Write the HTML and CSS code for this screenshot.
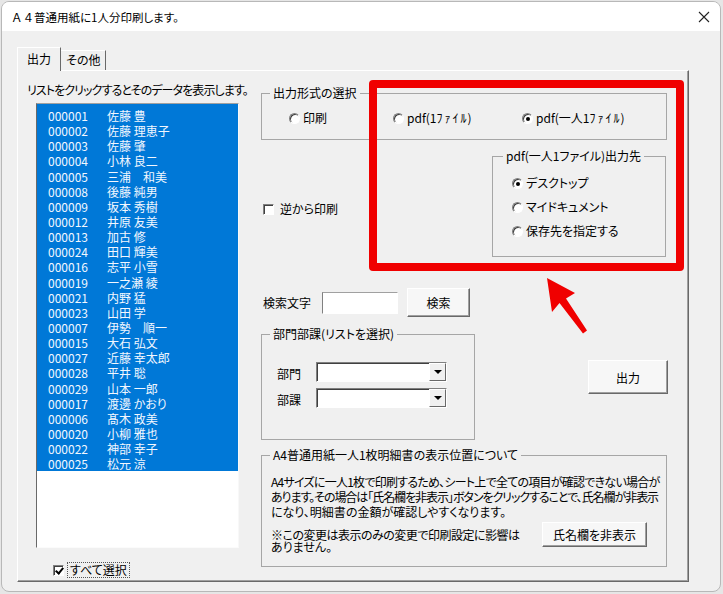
FILE: index.html
```html
<!DOCTYPE html>
<html lang="ja">
<head>
<meta charset="utf-8">
<title>A4</title>
<link rel="stylesheet" href="styles.css">
</head>
<body>
<div class="window">
  <div class="titlebar">
    <span class="title"><span class="fw">Ａ４</span>普通用紙に1人分印刷します。</span>
    <svg class="close" width="12" height="12" viewBox="0 0 12 12"><path d="M1 1L11 11M11 1L1 11" stroke="#222" stroke-width="1.1" fill="none"/></svg>
  </div>
  <div class="client">
    <div class="tabs">
      <div class="tab active">出力</div>
      <div class="tab">その他</div>
    </div>
    <div class="panel">
      <div class="left">
        <div class="hint">リストをクリックするとそのデータを表示します。</div>
        <div class="list">
          <div class="sel">
            <div class="row"><span class="id">000001</span><span>佐藤 豊</span></div>
            <div class="row"><span class="id">000002</span><span>佐藤 理恵子</span></div>
            <div class="row"><span class="id">000003</span><span>佐藤 肇</span></div>
            <div class="row"><span class="id">000004</span><span>小林 良二</span></div>
            <div class="row"><span class="id">000005</span><span>三浦　和美</span></div>
            <div class="row"><span class="id">000008</span><span>後藤 純男</span></div>
            <div class="row"><span class="id">000009</span><span>坂本 秀樹</span></div>
            <div class="row"><span class="id">000012</span><span>井原 友美</span></div>
            <div class="row"><span class="id">000013</span><span>加古 修</span></div>
            <div class="row"><span class="id">000024</span><span>田口 輝美</span></div>
            <div class="row"><span class="id">000016</span><span>志平 小雪</span></div>
            <div class="row"><span class="id">000019</span><span>一之瀬 綾</span></div>
            <div class="row"><span class="id">000021</span><span>内野 猛</span></div>
            <div class="row"><span class="id">000023</span><span>山田 学</span></div>
            <div class="row"><span class="id">000007</span><span>伊勢　順一</span></div>
            <div class="row"><span class="id">000015</span><span>大石 弘文</span></div>
            <div class="row"><span class="id">000027</span><span>近藤 幸太郎</span></div>
            <div class="row"><span class="id">000028</span><span>平井 聡</span></div>
            <div class="row"><span class="id">000029</span><span>山本 一郎</span></div>
            <div class="row"><span class="id">000017</span><span>渡邊 かおり</span></div>
            <div class="row"><span class="id">000006</span><span>髙木 政美</span></div>
            <div class="row"><span class="id">000020</span><span>小柳 雅也</span></div>
            <div class="row"><span class="id">000022</span><span>神部 幸子</span></div>
            <div class="row"><span class="id">000025</span><span>松元 涼</span></div>
          </div>
        </div>
        <div class="check-row all"><span class="cb checked"></span><span class="focus">すべて選択</span></div>
      </div>

      <div class="right">
        <fieldset class="group g-format">
          <legend>出力形式の選択</legend>
          <div class="radios-h">
            <span class="opt w1"><span class="rb"></span>印刷</span>
            <span class="opt w2"><span class="rb"></span>pdf(1<span class="hk">ﾌｧｲﾙ</span>)</span>
            <span class="opt"><span class="rb on"></span>pdf(一人1<span class="hk">ﾌｧｲﾙ</span>)</span>
          </div>
        </fieldset>

        <div class="mid">
          <div class="check-row reverse"><span class="cb"></span><span class="cb-text">逆から印刷</span></div>
          <fieldset class="group g-dest">
            <legend>pdf(一人1ファイル)出力先</legend>
            <div class="radios-v">
              <span class="opt"><span class="rb on"></span>デスクトップ</span>
              <span class="opt"><span class="rb"></span>マイドキュメント</span>
              <span class="opt"><span class="rb"></span>保存先を指定する</span>
            </div>
          </fieldset>
        </div>

        <div class="search">
          <span class="search-label">検索文字</span>
          <span class="input"></span>
          <span class="btn btn-search">検索</span>
        </div>

        <div class="dept-row">
          <fieldset class="group g-dept">
            <legend>部門部課(リストを選択)</legend>
            <div class="combos">
              <div class="combo-row"><span class="combo-label">部門</span><span class="combo"><span class="drop"></span></span></div>
              <div class="combo-row"><span class="combo-label">部課</span><span class="combo"><span class="drop"></span></span></div>
            </div>
          </fieldset>
          <span class="btn btn-out">出力</span>
        </div>

        <fieldset class="group g-info">
          <legend>A4普通用紙一人1枚明細書の表示位置について</legend>
          <div class="info">
            <div class="info-text"><div class="tight-1">A4サイズに一人1枚で印刷するため、シート上で全ての項目が確認できない場合が</div><div class="tight">あります。その場合は「氏名欄を非表示」ボタンをクリックすることで、氏名欄が非表示</div><div>になり、明細書の金額が確認しやすくなります。</div></div>
            <div class="info-bottom">
              <div class="note"><div class="note-1">※この変更は表示のみの変更で印刷設定に影響は</div><div>ありません。</div></div>
              <span class="btn btn-hide">氏名欄を非表示</span>
            </div>
          </div>
        </fieldset>
      </div>
    </div>
  </div>
</div>
<div class="annot-box"></div>
<svg class="annot-arrow" width="56" height="66" viewBox="0 0 56 66"><polygon points="7,6 35,21 26,26.5 47,58.5 43,61.5 19.5,31 12,40" fill="#f00000"/></svg>
</body>
</html>
```

FILE: styles.css
```css
* { box-sizing: border-box; }
html, body { margin: 0; padding: 0; }
body {
  width: 723px;
  height: 594px;
  position: relative;
  overflow: hidden;
  background: #e6e6e6;
  font-family: "Noto Sans CJK JP", "Noto Sans", sans-serif;
  font-size: 12px;
  color: #000;
  font-feature-settings: "palt" 1;
}
.window {
  margin: 1px 0 0 1px;
  width: 720px;
  height: 591px;
  border: 1px solid #b8b8b8;
  border-radius: 8px;
  overflow: hidden;
  background: #f0f0f0;
}
.titlebar {
  height: 29px;
  background: #fff;
  display: flex;
  align-items: center;
  padding-left: 9px;
}
.title { font-size: 11.5px; line-height: 16px; white-space: nowrap; }
.fw { font-feature-settings: normal; }
.close { margin-left: auto; margin-right: 10px; }

.client { padding: 16px 0 0 15px; }
.tabs { display: flex; align-items: flex-end; height: 23px; }
.tab {
  height: 20px;
  line-height: 18px;
  padding: 0 5px;
  border-top: 1px solid #fff;
  border-right: 1px solid #696969;
  font-size: 12px;
}
.tab.active {
  height: 24px;
  line-height: 22px;
  width: 44px;
  padding: 0 0 0 9px;
  margin-bottom: -1px;
  border-left: 1px solid #fff;
  background: #f0f0f0;
  position: relative;
  z-index: 1;
}

.panel {
  width: 672px;
  height: 512px;
  border-top: 1px solid #fff;
  border-left: 1px solid #fff;
  border-right: 1px solid #696969;
  border-bottom: 1px solid #696969;
  box-shadow: inset -1px -1px #a0a0a0;
  display: grid;
  grid-template-columns: 224px 406px;
  column-gap: 10px;
  align-items: start;
  padding-left: 9px;
}

/* left column */
.hint { margin-top: 11px; line-height: 16px; white-space: nowrap; letter-spacing: -0.9px; }
.list {
  margin: 5px 0 0 9px;
  width: 203px;
  height: 445px;
  background: #fff;
  border-top: 1px solid #a0a0a0;
  border-left: 1px solid #696969;
  border-right: 1px solid #f8f8f8;
  border-bottom: 1px solid #fbfbfb;
}
.sel {
  background: #0078d7;
  color: #f2f7ff;
  padding-top: 4px;
  height: 367px;
}
.row { display: flex; line-height: 15.15px; height: 15.15px; padding-left: 11px; white-space: nowrap; }
.id { width: 59px; }

.check-row { display: flex; align-items: center; line-height: 16px; white-space: nowrap; }
.all { margin: 14px 0 0 26px; }
.focus { margin-left: 3px; border: 1px dotted #555; padding: 0 2px; line-height: 14px; }
.cb {
  width: 11px;
  height: 11px;
  background: #fff;
  border: 1px solid;
  border-color: #808080 #fff #fff #808080;
  box-shadow: inset 1px 1px #404040;
  position: relative;
  flex: none;
}
.cb.checked::after {
  content: "";
  position: absolute;
  left: 3px;
  top: 0px;
  width: 3px;
  height: 6px;
  border: solid #000;
  border-width: 0 2px 2px 0;
  transform: rotate(40deg);
}

/* right column */
.right { margin-top: 14px; }
.group {
  margin: 0;
  padding: 0;
  min-width: 0;
  border: 1px solid #a6a6a6;
}
.group legend {
  padding: 0 3px;
  margin-left: 8px;
  line-height: 16px;
  font-size: 12px;
  white-space: nowrap;
}
.opt { display: inline-flex; align-items: center; line-height: 16px; white-space: nowrap; }
.hk { letter-spacing: 2px; margin-right: -1px; }
.rb {
  width: 11px;
  height: 11px;
  border-radius: 50%;
  background: #fff;
  border: 1px solid;
  border-color: #808080 #fff #fff #808080;
  box-shadow: inset 1px 1px #404040;
  margin-right: 3px;
  position: relative;
  flex: none;
}
.rb.on::after {
  content: "";
  position: absolute;
  left: 3px;
  top: 3px;
  width: 4px;
  height: 4px;
  border-radius: 50%;
  background: #000;
}

.g-format { height: 55px; }
.radios-h { display: flex; padding: 9px 0 0 27px; }
.w1 { width: 104px; }
.w2 { width: 129px; }

.mid { display: flex; align-items: flex-start; margin-top: 8px; }
.reverse { margin: 53px 0 0 2px; }
.cb-text { margin-left: 6px; }
.g-dest { margin-left: auto; margin-right: 1px; width: 174px; height: 109px; }
.g-dest legend { margin-left: 10px; }
.radios-v { display: flex; flex-direction: column; gap: 8px; padding: 11px 0 0 19px; }

.search { display: flex; align-items: center; margin-top: 31px; height: 29px; }
.search-label { margin-left: 2px; width: 59px; white-space: nowrap; }
.input {
  width: 76px;
  height: 22px;
  background: #fff;
  border: 1px solid;
  border-color: #a0a0a0 #fff #fff #808080;
}
.btn {
  display: flex;
  align-items: center;
  justify-content: center;
  background: #f7f7f7;
  border: 1px solid;
  border-color: #fff #696969 #696969 #fff;
  box-shadow: inset -1px -1px #a0a0a0;
  white-space: nowrap;
  font-size: 12px;
}
.btn-search { margin-left: 9px; width: 63px; height: 29px; }

.dept-row { display: flex; align-items: flex-start; margin-top: 9px; }
.g-dept { width: 214px; height: 114px; }
.combos { display: flex; flex-direction: column; gap: 6px; padding: 20px 0 0 15px; }
.combo-row { display: flex; align-items: center; height: 20px; }
.combo-label { width: 39px; padding-top: 3px; }
.combo {
  width: 131px;
  height: 20px;
  background: #fff;
  border: 1px solid;
  border-color: #808080 #fff #fff #808080;
  box-shadow: inset 1px 1px #404040;
  display: flex;
  justify-content: flex-end;
}
.drop {
  width: 17px;
  height: 18px;
  background: #f0f0f0;
  border: 1px solid;
  border-color: #fff #696969 #696969 #fff;
  display: flex;
  align-items: center;
  justify-content: center;
}
.drop::after {
  content: "";
  border-top: 4px solid #000;
  border-left: 4px solid transparent;
  border-right: 4px solid transparent;
}
.btn-out { margin: 34px -1px 0 auto; width: 80px; height: 34px; }

.g-info { margin-top: 7px; height: 120px; }
.info { padding: 11px 0 0 9px; }
.info-text { line-height: 15px; white-space: nowrap; }
.tight-1 { letter-spacing: -0.75px; }
.tight { letter-spacing: -1.05px; }
.info-bottom { display: flex; align-items: flex-start; margin-top: 3px; }
.note { margin-top: 7px; width: 271px; line-height: 12px; white-space: nowrap; }
.note-1 { letter-spacing: -0.5px; }
.btn-hide { width: 105px; height: 25px; }

/* annotations over the dialog */
.annot-box {
  position: absolute;
  left: 369px;
  top: 80px;
  width: 315px;
  height: 191px;
  border: 8px solid #f00000;
  border-radius: 4px;
}
.annot-arrow { position: absolute; left: 540px; top: 272px; }
```
